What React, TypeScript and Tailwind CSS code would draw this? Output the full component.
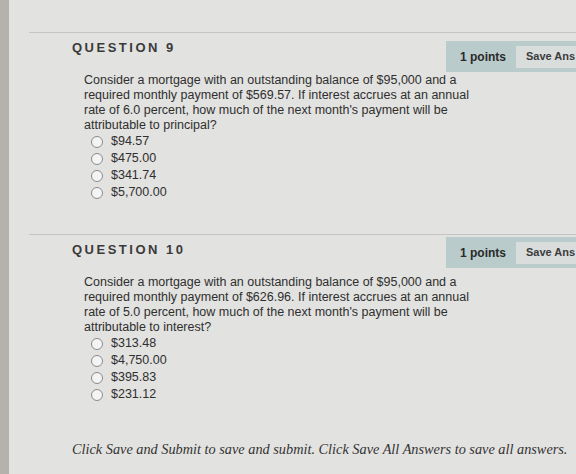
import React from 'react'

type Question = {
    num: number
    text: string[]
    options: string[]
}

const questions: Question[] = [
    {
        num: 9,
        text: [
            'Consider a mortgage with an outstanding balance of $95,000 and a',
            'required monthly payment of $569.57. If interest accrues at an annual',
            "rate of 6.0 percent, how much of the next month's payment will be",
            'attributable to principal?',
        ],
        options: ['$94.57', '$475.00', '$341.74', '$5,700.00'],
    },
    {
        num: 10,
        text: [
            'Consider a mortgage with an outstanding balance of $95,000 and a',
            'required monthly payment of $626.96. If interest accrues at an annual',
            "rate of 5.0 percent, how much of the next month's payment will be",
            'attributable to interest?',
        ],
        options: ['$313.48', '$4,750.00', '$395.83', '$231.12'],
    },
]

function QuestionBlock({ q, boxTop }: { q: Question; boxTop: string }) {
    return (
        <div className="border-t border-[#c4c4c2] ml-[20px]">
            <div className="flex items-start justify-between h-[39px]">
                <div className="pl-[43px] pt-[5px] text-[13px] font-bold tracking-[2.5px] text-[#3a3a3a]">
                    QUESTION {q.num}
                </div>
                <div className={`${boxTop} flex items-center h-[31px] w-[130px] bg-[#b9cccb] pl-[14px] gap-[10px]`}>
                    <span className="text-[12px] font-bold text-[#2a2a2a]">1 points</span>
                    <span className="flex items-center h-[22px] flex-1 bg-[#d9dddc] pl-[10px] text-[11px] font-bold text-[#3c3c3c] whitespace-nowrap overflow-hidden">
                        Save Ans
                    </span>
                </div>
            </div>
            <div className="pl-[55px] pt-[1px] text-[12.5px] leading-[15px] text-[#2f2f2f]">
                {q.text.map((line) => (
                    <div key={line}>{line}</div>
                ))}
            </div>
            <div className="pl-[62px]">
                {q.options.map((opt) => (
                    <div key={opt} className="flex items-center h-[17px] gap-[8px] text-[12.5px] text-[#2f2f2f]">
                        <span className="w-[12px] h-[12px] rounded-full border border-[#8a8a8a] bg-[#f4f4f4]" />
                        <span>{opt}</span>
                    </div>
                ))}
            </div>
        </div>
    )
}

export default function App() {
    return (
        <div
            className="w-[576px] h-[474px] flex bg-[#e2e2e0] overflow-hidden"
            style={{ fontFamily: '"Liberation Sans", Arial, sans-serif' }}
        >
            <div className="w-[9px] bg-[#b3b3ab]" />
            <div className="flex-1 flex flex-col">
                <div className="pt-[32px]">
                    <QuestionBlock q={questions[0]} boxTop="mt-[8px]" />
                </div>
                <div className="pt-[33px]">
                    <QuestionBlock q={questions[1]} boxTop="mt-[2px]" />
                </div>
                <div
                    className="mt-auto mb-[14px] pl-[63px] text-[14.3px] italic text-[#333] whitespace-nowrap"
                    style={{ fontFamily: '"Liberation Serif", Georgia, serif' }}
                >
                    Click Save and Submit to save and submit. Click Save All Answers to save all answers.
                </div>
            </div>
        </div>
    )
}
